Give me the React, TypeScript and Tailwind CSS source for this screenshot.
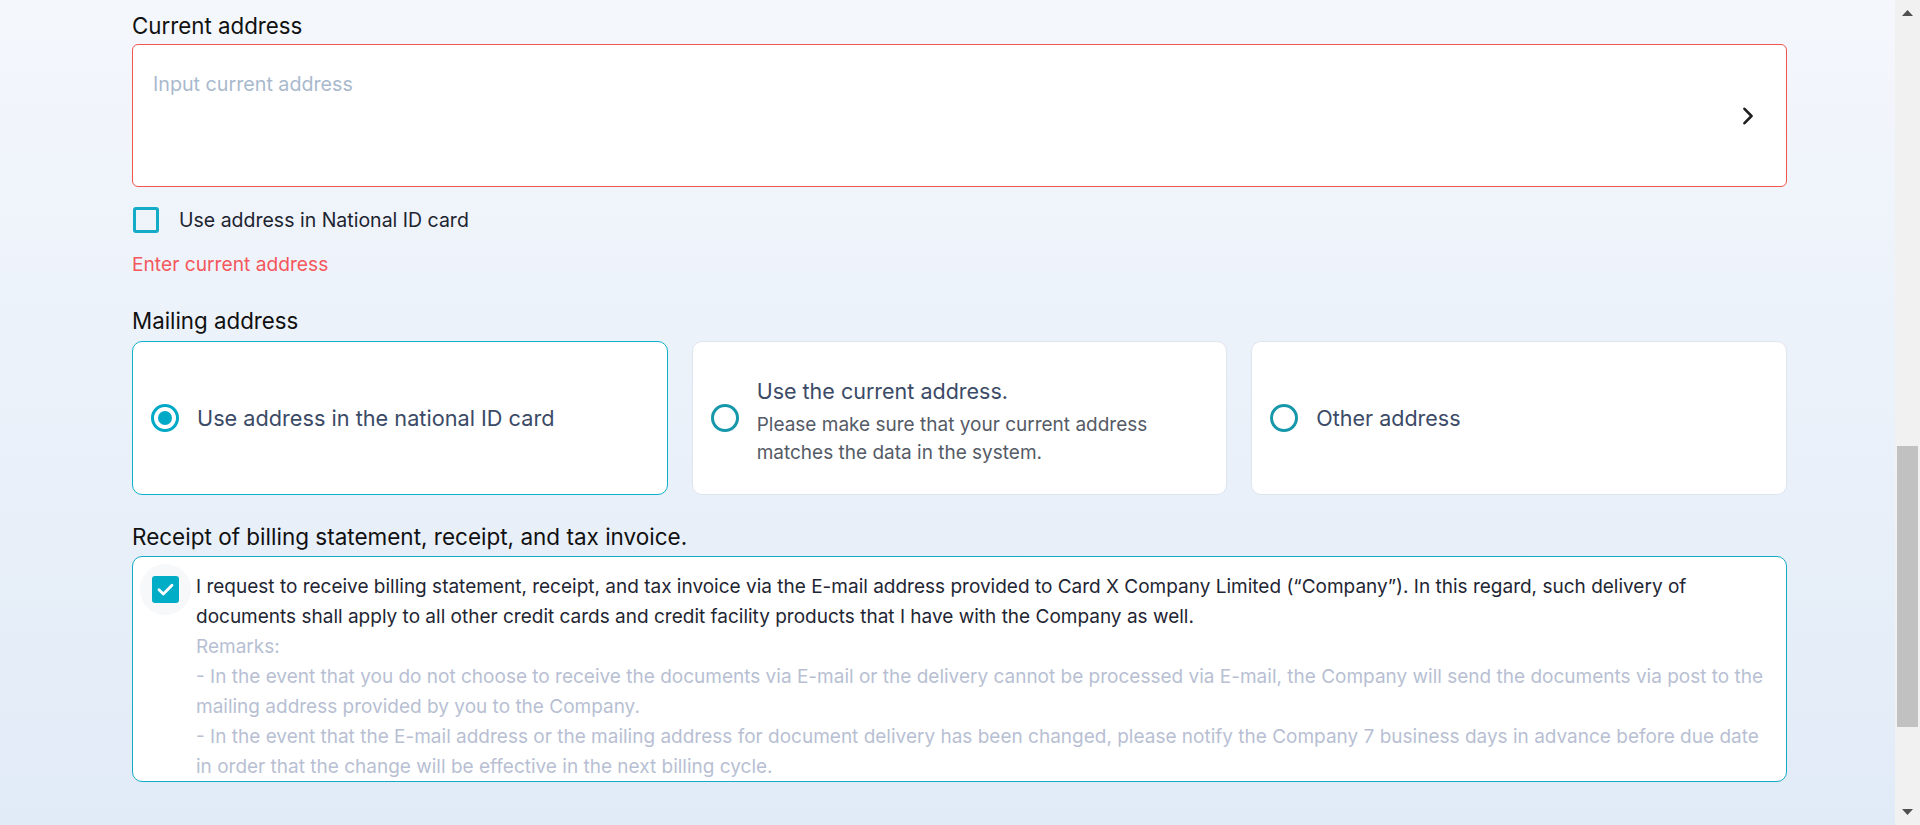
import React from 'react'

function Chevron() {
  return (
    <svg width="12" height="18" viewBox="0 0 12 18" fill="none">
      <path d="M2.5 1.8 9.5 9 2.5 16.2" stroke="#1f1f1f" strokeWidth="2.6" strokeLinecap="round" strokeLinejoin="round" />
    </svg>
  )
}

function Radio({ checked }: { checked?: boolean }) {
  return (
    <span
      className={
        checked
          ? 'flex h-[28px] w-[28px] shrink-0 items-center justify-center rounded-full border-[3px] border-[#00a9c6]'
          : 'flex h-[28px] w-[28px] shrink-0 items-center justify-center rounded-full border-[3px] border-[#1798aa]'
      }
    >
      {checked && <span className="h-[14px] w-[14px] rounded-full bg-[#00a9c6]" />}
    </span>
  )
}

function Scrollbar() {
  return (
    <div className="flex w-[25px] shrink-0 flex-col items-center bg-[#f1f1f1]">
      <div className="flex h-[26px] items-center justify-center">
        <svg width="11" height="6" viewBox="0 0 11 6">
          <path d="M0 6 5.5 0 11 6Z" fill="#505050" />
        </svg>
      </div>
      <div className="mt-[420px] h-[281px] w-[21px] bg-[#c1c1c1]" />
      <div className="flex-1" />
      <div className="flex h-[26px] items-center justify-center">
        <svg width="11" height="6" viewBox="0 0 11 6">
          <path d="M0 0 5.5 6 11 0Z" fill="#505050" />
        </svg>
      </div>
    </div>
  )
}

export default function App() {
  return (
    <div className="flex h-[825px] w-full overflow-hidden bg-linear-to-b from-[#f4f7fc] to-[#e1ebf7] font-['Inter',sans-serif]">
      <main className="flex-1 pl-[132px] pt-[12px]">
        <div className="w-[1655px]">
          {/* Current address */}
          <h3 className="text-[22.3px] leading-[28px] text-[#111]">Current address</h3>
          <div className="mt-1 flex h-[143px] rounded-[6px] border border-[#f2564d] bg-white pl-5 pr-[32px]">
            <span className="flex-1 pt-[25px] text-[19.7px] leading-[28px] text-[#a9b9cd]">Input current address</span>
            <span className="self-center">
              <Chevron />
            </span>
          </div>

          <label className="mt-5 ml-px flex items-center gap-5">
            <span className="h-[26px] w-[26px] rounded-[3px] border-[3px] border-[#14abc6]" />
            <span className="text-[19.5px] leading-[26px] text-[#1d2430]">Use address in National ID card</span>
          </label>

          <p className="mt-[17px] text-[19.2px] leading-[28px] text-[#f4575c]">Enter current address</p>

          {/* Mailing address */}
          <h3 className="mt-[29px] text-[22.3px] leading-[28px] text-[#111]">Mailing address</h3>
          <div className="mt-[6px] grid grid-cols-3 gap-6">
            <div className="flex h-[154px] items-center gap-[18px] rounded-[10px] border border-[#0fb0cc] bg-white pl-[18px]">
              <Radio checked />
              <span className="text-[21.7px] leading-[30px] text-[#3b4a66]">Use address in the national ID card</span>
            </div>
            <div className="flex h-[154px] items-center gap-[18px] rounded-[10px] border border-[#dfe5ee] bg-white pl-[18px]">
              <Radio />
              <div className="pt-[7px]">
                <div className="text-[21.5px] leading-[30px] text-[#3b4a66]">Use the current address.</div>
                <div className="mt-[5px] text-[19px] leading-[28px] text-[#555b66]">
                  Please make sure that your current address
                  <br />
                  matches the data in the system.
                </div>
              </div>
            </div>
            <div className="flex h-[154px] items-center gap-[18px] rounded-[10px] border border-[#dfe5ee] bg-white pl-[18px]">
              <Radio />
              <span className="text-[21.5px] leading-[30px] text-[#3b4a66]">Other address</span>
            </div>
          </div>

          {/* Billing statement */}
          <h3 className="mt-[28px] text-[22.5px] leading-[28px] text-[#111]">
            Receipt of billing statement, receipt, and tax invoice.
          </h3>
          <div className="mt-[5px] flex h-[226px] gap-[17px] overflow-hidden rounded-[10px] border border-[#16aac5] bg-white pl-[19px] pr-6 pt-[15px]">
            <span className="relative mt-1 h-[27px] w-[27px] shrink-0">
              <span className="absolute -inset-[12px] rounded-full bg-[#f7f8fa]" />
              <span className="relative flex h-[27px] w-[27px] items-center justify-center rounded-[3px] bg-[#00adc7]">
                <svg width="17" height="13" viewBox="0 0 17 13" fill="none">
                  <path d="M2 6.8 6.3 11 15 2.2" stroke="#fff" strokeWidth="2.8" strokeLinecap="round" strokeLinejoin="round" />
                </svg>
              </span>
            </span>
            <div className="whitespace-nowrap text-[19px] leading-[30px]">
              <p className="text-[#1f2633]">
                I request to receive billing statement, receipt, and tax invoice via the E-mail address provided to Card X Company Limited (“Company”). In this regard, such delivery of
                <br />
                documents shall apply to all other credit cards and credit facility products that I have with the Company as well.
              </p>
              <div className="text-[#b8bfd3]">
                <p>Remarks:</p>
                <p>
                  - In the event that you do not choose to receive the documents via E-mail or the delivery cannot be processed via E-mail, the Company will send the documents via post to the
                  <br />
                  mailing address provided by you to the Company.
                </p>
                <p>
                  - In the event that the E-mail address or the mailing address for document delivery has been changed, please notify the Company 7 business days in advance before due date
                  <br />
                  in order that the change will be effective in the next billing cycle.
                </p>
              </div>
            </div>
          </div>
        </div>
      </main>
      <Scrollbar />
    </div>
  )
}
